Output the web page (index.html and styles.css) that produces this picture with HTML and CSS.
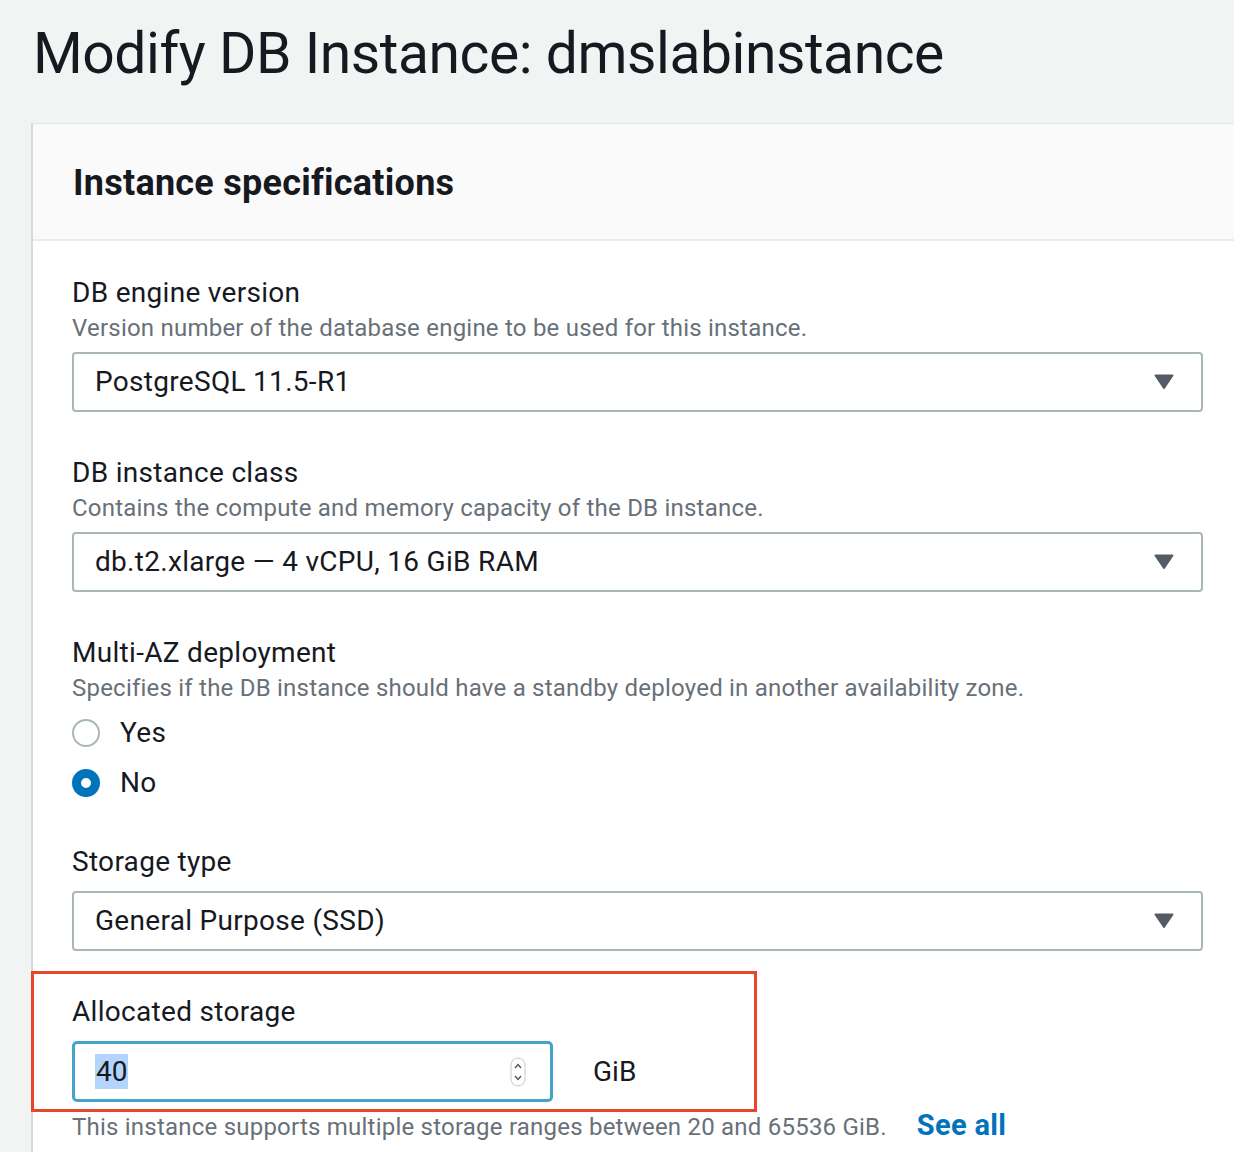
FILE: index.html
```html
<!DOCTYPE html>
<html lang="en">
<head>
<meta charset="utf-8">
<title>Modify DB Instance</title>
<link rel="stylesheet" href="styles.css">
</head>
<body>
<h1 class="page-title">Modify DB Instance: dmslabinstance</h1>
<section class="card">
  <header class="card-header">
    <h2 class="card-title">Instance specifications</h2>
  </header>
  <div class="card-body">
    <div class="field">
      <div class="label">DB engine version</div>
      <div class="desc">Version number of the database engine to be used for this instance.</div>
      <div class="select">
        <span class="select-value">PostgreSQL 11.5-R1</span>
        <svg class="caret" width="20" height="15" viewBox="0 0 20 15"><path d="M1.5 1.5 H18.5 L10 14 Z" fill="#545b64" stroke="#545b64" stroke-width="2" stroke-linejoin="round"/></svg>
      </div>
    </div>
    <div class="field">
      <div class="label">DB instance class</div>
      <div class="desc">Contains the compute and memory capacity of the DB instance.</div>
      <div class="select">
        <span class="select-value">db.t2.xlarge — 4 vCPU, 16 GiB RAM</span>
        <svg class="caret" width="20" height="15" viewBox="0 0 20 15"><path d="M1.5 1.5 H18.5 L10 14 Z" fill="#545b64" stroke="#545b64" stroke-width="2" stroke-linejoin="round"/></svg>
      </div>
    </div>
    <div class="field field-radio">
      <div class="label">Multi-AZ deployment</div>
      <div class="desc">Specifies if the DB instance should have a standby deployed in another availability zone.</div>
      <div class="radios">
        <div class="radio-row"><span class="radio"></span><span class="radio-label">Yes</span></div>
        <div class="radio-row"><span class="radio radio-on"></span><span class="radio-label">No</span></div>
      </div>
    </div>
    <div class="field field-nodesc">
      <div class="label">Storage type</div>
      <div class="select">
        <span class="select-value">General Purpose (SSD)</span>
        <svg class="caret" width="20" height="15" viewBox="0 0 20 15"><path d="M1.5 1.5 H18.5 L10 14 Z" fill="#545b64" stroke="#545b64" stroke-width="2" stroke-linejoin="round"/></svg>
      </div>
    </div>
    <div class="field field-nodesc field-storage">
      <div class="highlight-box"></div>
      <div class="label">Allocated storage</div>
      <div class="input-row">
        <div class="input">
          <span class="input-value">40</span>
          <svg class="spinner" width="16" height="30" viewBox="0 0 16 30"><rect x="1" y="1" width="14" height="28" rx="7" fill="#fff" stroke="#c8c8c8" stroke-width="1"/><path d="M5 11 L8 7.5 L11 11" fill="none" stroke="#555" stroke-width="1.4"/><path d="M5 19 L8 22.5 L11 19" fill="none" stroke="#555" stroke-width="1.4"/></svg>
        </div>
        <span class="unit">GiB</span>
      </div>
      <div class="help">
        <span class="help-text">This instance supports multiple storage ranges between 20 and 65536 GiB.</span>
        <a class="link" href="#">See all</a>
      </div>
    </div>
  </div>
</section>
</body>
</html>
```

FILE: styles.css
```css
html, body {
  margin: 0;
  padding: 0;
}
body {
  background: #f2f3f3;
  font-family: Roboto, "Liberation Sans", Arial, sans-serif;
  color: #16191f;
  overflow: hidden;
  height: 1152px;
  display: flex;
  flex-direction: column;
}
.page-title {
  margin: 0;
  padding: 18px 0 0 33px;
  height: 123px;
  flex: none;
  box-sizing: border-box;
  font-size: 57px;
  line-height: 72px;
  font-weight: 400;
  letter-spacing: -0.45px;
}
.card {
  flex: 1;
  margin-left: 31px;
  background: #fff;
  border-left: 2px solid #d5dbdb;
  border-top: 1px solid #e4e7e7;
  box-sizing: border-box;
}
.card-header {
  background: #fafafa;
  height: 117px;
  box-sizing: border-box;
  border-bottom: 2px solid #eaeded;
  display: flex;
  align-items: center;
  padding-left: 40px;
}
.card-title {
  margin: 0;
  font-size: 36px;
  font-weight: 700;
  line-height: 44px;
  padding-top: 2px;
  letter-spacing: 0.25px;
}
.card-body {
  padding: 34px 31px 0 39px;
}
.field {
  margin-bottom: 43px;
  position: relative;
}
.label {
  font-size: 28px;
  line-height: 36px;
  height: 36px;
  letter-spacing: 0.3px;
}
.desc {
  font-size: 24px;
  line-height: 32px;
  color: #687078;
  margin-top: 1px;
  margin-bottom: 8px;
  letter-spacing: 0.22px;
}
.field-nodesc .label {
  margin-bottom: 11px;
}
.field-radio {
  margin-bottom: 36px;
}
.select {
  height: 60px;
  box-sizing: border-box;
  border: 2px solid #aab7b8;
  border-radius: 4px;
  display: flex;
  align-items: center;
  justify-content: space-between;
  padding: 0 27px 0 21px;
  background: #fff;
}
.select-value {
  font-size: 28px;
  line-height: 36px;
  letter-spacing: 0.3px;
}
.caret {
  display: block;
  margin-top: -2px;
}
.radios {
  display: flex;
  flex-direction: column;
  margin-top: -4px;
}
.radio-row {
  display: flex;
  align-items: center;
  height: 50px;
}
.radio {
  width: 28px;
  height: 28px;
  box-sizing: border-box;
  border: 2px solid #aab7b8;
  border-radius: 50%;
  background: #fff;
  margin-right: 20px;
}
.radio-on {
  border: 9px solid #0073bb;
}
.radio-label {
  font-size: 28px;
  line-height: 36px;
  letter-spacing: 0.3px;
}
.field-storage {
  margin-top: 1px;
  margin-bottom: 0;
}
.highlight-box {
  position: absolute;
  left: -41px;
  top: -23px;
  width: 726px;
  height: 141px;
  box-sizing: border-box;
  border: 3px solid #e8452a;
  pointer-events: none;
}
.input-row {
  display: flex;
  align-items: center;
}
.input {
  width: 481px;
  height: 61px;
  box-sizing: border-box;
  border: 3px solid #44a3cc;
  border-radius: 5px;
  display: flex;
  align-items: center;
  justify-content: space-between;
  padding: 0 24px 0 20px;
  background: #fff;
}
.input-value {
  font-size: 28px;
  line-height: 35px;
  background: #b3d4fc;
  padding: 0 1px;
}
.spinner {
  display: block;
}
.unit {
  font-size: 28px;
  line-height: 36px;
  margin-left: 40px;
}
.help {
  margin-top: 6px;
  display: flex;
  align-items: baseline;
}
.help-text {
  font-size: 24px;
  line-height: 32px;
  color: #687078;
  letter-spacing: 0.22px;
}
.link {
  margin-left: 30px;
  font-size: 29px;
  font-weight: 700;
  color: #0073bb;
  text-decoration: none;
  letter-spacing: 0.3px;
}
```
